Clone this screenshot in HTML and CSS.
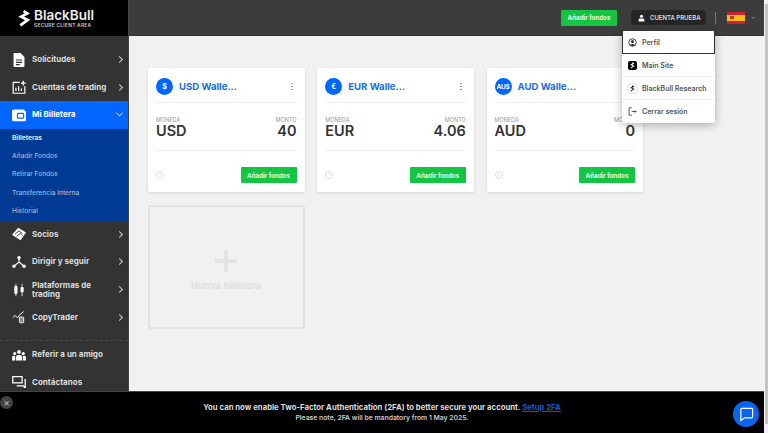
FILE: index.html
```html
<!DOCTYPE html>
<html lang="es">
<head>
<meta charset="utf-8">
<title>BlackBull</title>
<link rel="stylesheet" href="styles.css">
</head>
<body>
<div class="app">
  <aside class="sidebar">
    <div class="brand">
      <svg class="brand-mark" viewBox="0 0 14 20"><path d="M6 2l4 2.500L3.500 8l7 3.500L2.500 17.500" fill="none" stroke="#fff" stroke-width="3"/></svg>
      <div class="brand-text"><div class="brand-name">BlackBull</div><div class="brand-sub">SECURE CLIENT AREA</div></div>
    </div>
    <nav class="nav">
      <a class="nav-item"><svg class="nav-icon" viewBox="0 0 16 18"><path d="M2 0h8l5 5v12a1 1 0 0 1-1 1H2a1 1 0 0 1-1-1V1a1 1 0 0 1 1-1z" fill="#fff"/><path d="M4 9h8M4 12h8M4 15h5" stroke="#333" stroke-width="1.500"/></svg><span class="nav-label">Solicitudes</span><span class="chev"></span></a>
      <a class="nav-item"><svg class="nav-icon" viewBox="0 0 18 18" fill="none" stroke="#fff" stroke-width="1.500"><path d="M10 3H1.500v14h15V8"/><path d="M5 14v-4M8.500 14V8M12 14v-3M14.500 1v6M11.500 4h6"/></svg><span class="nav-label">Cuentas de trading</span><span class="chev"></span></a>
      <a class="nav-item active"><svg class="nav-icon" viewBox="0 0 18 16"><path d="M2 1h14v2h1a1 1 0 0 1 1 1v10a2 2 0 0 1-2 2H2a2 2 0 0 1-2-2V3a2 2 0 0 1 2-2z" fill="#fff"/><rect x="7" y="6" width="8" height="6" rx="1" fill="none" stroke="#06f" stroke-width="1.500"/></svg><span class="nav-label">Mi Billetera</span><span class="chev down"></span></a>
      <div class="subnav">
        <a class="sub-item current">Billeteras</a>
        <a class="sub-item">Añadir Fondos</a>
        <a class="sub-item">Retirar Fondos</a>
        <a class="sub-item">Transferencia Interna</a>
        <a class="sub-item">Historial</a>
      </div>
      <a class="nav-item"><svg class="nav-icon" viewBox="0 0 18 16"><path d="M8 0l10 6-7 10L0 9z" fill="#fff"/><path d="M4 8l5-4 4 3M6 11l5-4 3 3" fill="none" stroke="#333" stroke-width="1.200"/></svg><span class="nav-label">Socios</span><span class="chev"></span></a>
      <a class="nav-item"><svg class="nav-icon" viewBox="0 0 18 16" fill="none" stroke="#fff" stroke-width="1.500"><path d="M9 3v5L2 14M9 8l7 6"/><g fill="#fff" stroke="none"><circle cx="9" cy="2.500" r="2.200"/><circle cx="2.500" cy="13.500" r="2.200"/><circle cx="15.500" cy="13.500" r="2.200"/></g></svg><span class="nav-label">Dirigir y seguir</span><span class="chev"></span></a>
      <a class="nav-item tall"><svg class="nav-icon" viewBox="0 0 16 18"><path d="M4 1v16M12 1v16" stroke="#fff" stroke-width="1"/><rect x="2" y="4" width="4" height="10" rx="1" fill="#fff"/><rect x="10" y="5" width="4" height="7" rx="1" fill="#fff"/></svg><span class="nav-label">Plataformas de trading</span><span class="chev"></span></a>
      <a class="nav-item"><svg class="nav-icon" viewBox="0 0 18 16" fill="none" stroke="#fff" stroke-width="1.200"><path d="M1 9l3-3 3 3 3-4 5-4"/><rect x="9.500" y="8" width="5.500" height="7.500" rx="1.500" fill="#888"/></svg><span class="nav-label">CopyTrader</span><span class="chev"></span></a>
      <div class="nav-divider"></div>
      <a class="nav-item"><svg class="nav-icon" viewBox="0 0 18 14" fill="#fff"><circle cx="9" cy="3" r="2.500"/><circle cx="3.500" cy="5" r="2"/><circle cx="14.500" cy="5" r="2"/><path d="M5 14v-4a3 3 0 0 1 3-3h2a3 3 0 0 1 3 3v4zM0 14v-4a2 2 0 0 1 2-2h2v6zM14 14V8h2a2 2 0 0 1 2 2v4z"/></svg><span class="nav-label">Referir a un amigo</span></a>
      <a class="nav-item"><svg class="nav-icon" viewBox="0 0 18 16" fill="none" stroke="#fff" stroke-width="1.600"><path d="M1 1h12v8H1z"/><path d="M16 5h1v10h-1l-1-2H6"/></svg><span class="nav-label">Contáctanos</span></a>
    </nav>
  </aside>
  <div class="content">
    <header class="topbar">
      <a class="btn top-btn">Añadir fondos</a>
      <div class="account"><svg class="account-icon" viewBox="0 0 12 12" fill="#fff"><circle cx="6" cy="3" r="2.600"/><path d="M1 12V9.500A2.500 2.500 0 0 1 3.500 7h5A2.500 2.500 0 0 1 11 9.500V12z"/></svg>CUENTA PRUEBA</div>
      <div class="top-sep"></div>
      <div class="flag"><span class="flag-mid"><i></i></span></div>
      <span class="caret"></span>
    </header>
    <main class="main">
      <div class="grid">
        <section class="card">
          <div class="card-head"><span class="coin">$</span><span class="wallet-name">USD Walle...</span><span class="dots"></span></div>
          <div class="card-body"><div><div class="cap">MONEDA</div><div class="val">USD</div></div><div class="right"><div class="cap">MONTO</div><div class="val">40</div></div></div>
          <div class="card-foot"><span class="help">?</span><a class="btn">Añadir fondos</a></div>
        </section>
        <section class="card">
          <div class="card-head"><span class="coin">€</span><span class="wallet-name">EUR Walle...</span><span class="dots"></span></div>
          <div class="card-body"><div><div class="cap">MONEDA</div><div class="val">EUR</div></div><div class="right"><div class="cap">MONTO</div><div class="val">4.06</div></div></div>
          <div class="card-foot"><span class="help">?</span><a class="btn">Añadir fondos</a></div>
        </section>
        <section class="card">
          <div class="card-head"><span class="coin wide">AU$</span><span class="wallet-name">AUD Walle...</span><span class="dots"></span></div>
          <div class="card-body"><div><div class="cap">MONEDA</div><div class="val">AUD</div></div><div class="right"><div class="cap">MONTO</div><div class="val">0</div></div></div>
          <div class="card-foot"><span class="help">?</span><a class="btn">Añadir fondos</a></div>
        </section>
        <section class="new-card"><span class="plus"></span><span class="new-label">Nueva billetera</span></section>
      </div>
    </main>
  </div>
</div>
<div class="menu">
  <a class="menu-item focused"><svg class="menu-icon" viewBox="0 0 12 12"><circle cx="6" cy="6" r="5" fill="none" stroke="#333" stroke-width="1.200"/><circle cx="6" cy="4.800" r="2" fill="#333"/><path d="M2.500 9.500a4 3 0 0 1 7 0L6 11z" fill="#333"/></svg>Perfil</a>
  <a class="menu-item"><span class="logo-box"><svg viewBox="0 0 14 20"><path d="M6 2l4 2.500L3.500 8l7 3.500L2.500 17.500" fill="none" stroke="#fff" stroke-width="3"/></svg></span>Main Site</a>
  <a class="menu-item"><span class="logo-box light"><svg viewBox="0 0 14 20"><path d="M6 2l4 2.500L3.500 8l7 3.500L2.500 17.500" fill="none" stroke="#222" stroke-width="3"/></svg></span>BlackBull Research</a>
  <a class="menu-item"><svg class="menu-icon" viewBox="0 0 12 12" fill="none" stroke="#333" stroke-width="1.100"><path d="M5 1H1.500v10H5M5 6h6M9 4.500L10.500 6 9 7.500"/></svg>Cerrar sesión</a>
</div>
<footer class="notice">
  <span class="notice-close">×</span>
  <p class="notice-main">You can now enable Two-Factor Authentication (2FA) to better secure your account. <a>Setup 2FA</a></p>
  <p class="notice-sub">Please note, 2FA will be mandatory from 1 May 2025.</p>
  <span class="chat"><svg viewBox="0 0 16 16" fill="none" stroke="#fff" stroke-width="1.300"><path d="M2.500 1.500h11a1 1 0 0 1 1 1v8a1 1 0 0 1-1 1H6l-4 3V2.500a1 1 0 0 1 1-1z"/></svg></span>
</footer>
<div class="scrollbar"><span class="thumb"></span></div>
</body>
</html>
```
FILE: styles.css
```css
* { box-sizing: border-box; }
html, body { margin: 0; height: 100%; overflow: hidden; }
body { font-family: "Inter", "Liberation Sans", sans-serif; background: #f1f1f1; color: #333; }
p { margin: 0; }
.app { display: flex; height: 391px; padding-right: 4px; }
.sidebar { width: 129px; flex: none; background: #333; border-right: 1px solid #444; display: flex; flex-direction: column; overflow: hidden; }
.brand { height: 36px; background: #000; flex: none; display: flex; align-items: center; gap: 3px; padding: 0 0 0 18px; }
.brand-mark { width: 13px; height: 19px; }
.brand-name { color: #eee; font-size: 13.500px; font-weight: 600; line-height: 13px; }
.brand-sub { color: #ccc; font-size: 4.900px; font-weight: 600; line-height: 6px; letter-spacing: .25px; }
.nav { padding-top: 10px; display: flex; flex-direction: column; }
.nav-item { height: 27.500px; flex: none; display: flex; align-items: center; padding: 0 4px 0 12px; color: #ddd; font-size: 8px; font-weight: 700; line-height: 9px; }
.nav-item.tall { height: 28px; }
.nav-item.active { background: #06f; color: #fff; }
.nav-icon { width: 14px; height: 14px; flex: none; margin-right: 6px; }
.nav-label { flex: 1; }
.chev { width: 5px; height: 5px; border-top: 1px solid #ccc; border-right: 1px solid #ccc; transform: rotate(45deg); margin-right: 2px; }
.chev.down { transform: rotate(135deg) translate(-1px, 1px); }
.subnav { background: #003a94; height: 92px; flex: none; display: flex; flex-direction: column; padding: 0 0 0 12px; }
.sub-item { height: 18.400px; display: flex; align-items: center; color: #9fb4d6; font-size: 6.600px; font-weight: 500; }
.sub-item.current { color: #dde5f2; font-weight: 700; }
.nav-divider { border-top: 1px dashed #454545; margin: 9px 0 0; }
.content { flex: 1; min-width: 0; display: flex; flex-direction: column; }
.topbar { height: 36px; flex: none; background: #3c3c3c; border-bottom: 1px solid #333; display: flex; align-items: center; padding: 0 9px 0 0; justify-content: flex-end; }
.btn { display: inline-flex; align-items: center; justify-content: center; width: 56px; height: 16px; background: #14c443; color: #eafbe9; border-radius: 1px; font-size: 6.200px; font-weight: 700; }
.top-btn { margin-right: 14px; }
.account { width: 75px; height: 15px; border-radius: 4px; background: #262626; color: #ddd; font-size: 6px; font-weight: 600; display: flex; align-items: center; padding-left: 7px; gap: 5px; }
.account-icon { width: 7px; height: 8px; }
.top-sep { width: 1px; height: 12px; background: #777; margin: 0 11px 0 9px; }
.flag { width: 18px; height: 12px; background: #c8232c; display: flex; align-items: center; }
.flag-mid { width: 100%; height: 6px; background: #f6bd1a; display: flex; align-items: center; padding-left: 3px; }
.flag-mid i { width: 4px; height: 3px; background: #b5431d; display: block; }
.caret { border: 2px solid transparent; border-top-color: #777; margin: 2px 0 0 6px; }
.main { flex: 1; padding: 32px 0 0 19px; }
.grid { display: grid; grid-template-columns: repeat(3, 156.500px); column-gap: 12.750px; row-gap: 13px; }
.card { height: 124px; background: #fff; border-radius: 2px; box-shadow: 0 1px 3px rgba(0,0,0,.12); padding: 9px 8px 0 8px; display: flex; flex-direction: column; }
.card-head { flex: none; display: flex; align-items: center; border-bottom: 1px solid #eee; padding-bottom: 6px; height: 26px; }
.coin { width: 17px; height: 17px; border-radius: 50%; background: #06f; color: #fff; font-size: 7px; font-weight: 700; display: flex; align-items: center; justify-content: center; flex: none; }
.coin.wide { font-size: 6.500px; letter-spacing: -.3px; }
.wallet-name { color: #1670ee; font-size: 9.600px; font-weight: 700; margin-left: 6px; flex: 1; }
.dots { width: 1.500px; height: 1.500px; background: #999; box-shadow: 0 -3px 0 #999, 0 3px 0 #999; margin-right: 4px; }
.card-body { height: 48px; flex: none; display: flex; justify-content: space-between; border-bottom: 1px solid #eee; padding-top: 14px; }
.right { text-align: right; }
.cap { color: #999; font-size: 5.500px; line-height: 6px; }
.val { color: #333; font-size: 14.500px; font-weight: 600; line-height: 15px; }
.card-foot { flex: 1; display: flex; align-items: center; justify-content: space-between; padding-top: 7px; }
.help { width: 8px; height: 8px; border: 1px solid #ddd; border-radius: 50%; color: #ddd; font-size: 5px; display: flex; align-items: center; justify-content: center; }
.new-card { height: 124px; border: 2px solid #e2e2e2; border-radius: 2px; display: flex; flex-direction: column; align-items: center; padding-top: 43px; }
.plus { width: 22px; height: 22px; background: linear-gradient(#e2e2e2, #e2e2e2) center / 22px 4px no-repeat, linear-gradient(#e2e2e2, #e2e2e2) center / 4px 22px no-repeat; }
.new-label { color: #e0e0e0; font-size: 9.600px; font-weight: 700; margin-top: 8px; }
.menu { position: absolute; left: 622px; top: 31px; width: 93px; background: #fff; border-radius: 2px; box-shadow: 0 2px 10px rgba(0,0,0,.3); display: flex; flex-direction: column; }
.menu-item { height: 23px; display: flex; align-items: center; gap: 5px; padding-left: 6px; border-bottom: 1px solid #efefef; color: #555; font-size: 7px; font-weight: 600; }
.menu-item:last-child { border-bottom: 0; }
.menu-item.focused { border: 1px solid #333; border-top: 0; padding-left: 5px; }
.menu-icon { width: 9px; height: 9px; flex: none; }
.logo-box { width: 9px; height: 9px; border-radius: 2px; background: #000; display: flex; align-items: center; justify-content: center; flex: none; }
.logo-box svg { width: 5px; height: 7px; }
.logo-box.light { background: #fff; box-shadow: 0 0 3px rgba(0,0,0,.3); border-radius: 50%; }
.notice { position: absolute; left: 0; right: 4px; top: 391px; height: 42px; background: #000; border-top: 1px solid #444; text-align: center; padding: 10px 0 0 0; }
.notice-main { color: #ddd; font-size: 7.750px; font-weight: 700; line-height: 10px; }
.notice-main a { color: #0f5ad0; text-decoration: underline; }
.notice-sub { color: #ccc; font-size: 6.800px; font-weight: 600; line-height: 12px; }
.notice-close { position: absolute; left: 0; top: 4px; width: 13px; height: 13px; border-radius: 50%; background: #444; color: #bbb; font-size: 10px; line-height: 13px; }
.chat { position: absolute; left: 733px; top: 9px; width: 26px; height: 26px; border-radius: 50%; background: #0a66ee; display: flex; align-items: center; justify-content: center; }
.chat svg { width: 15px; height: 15px; }
.scrollbar { position: absolute; right: 0; top: 0; width: 4px; height: 433px; background: #f1f1f1; padding: 4px 0 0 1px; }
.thumb { display: block; width: 3px; height: 420px; background: #c4c4c4; }
```
